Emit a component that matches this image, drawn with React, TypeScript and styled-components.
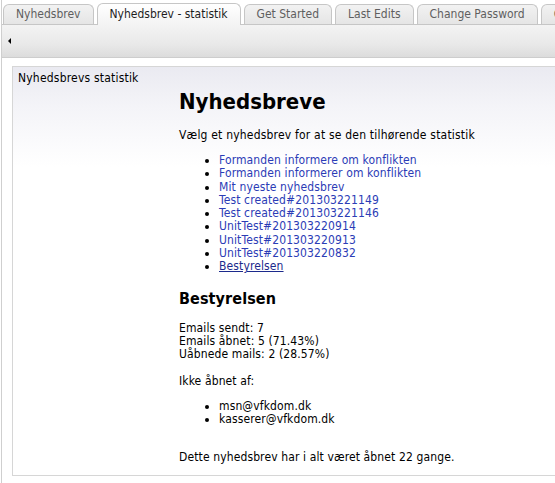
import React from "react";
import styled, { createGlobalStyle } from "styled-components";

const GlobalStyle = createGlobalStyle`
  html, body {
    margin: 0;
    padding: 0;
    background: #fff;
  }
  body {
    font-family: "DejaVu Sans Condensed", "DejaVu Sans", sans-serif;
    font-size: 12px;
    color: #000;
  }
`;

const tabs = [
  "Nyhedsbrev",
  "Nyhedsbrev - statistik",
  "Get Started",
  "Last Edits",
  "Change Password",
  "Change Settings",
];

const newsletters = [
  "Formanden informere om konflikten",
  "Formanden informerer om konflikten",
  "Mit nyeste nyhedsbrev",
  "Test created#201303221149",
  "Test created#201303221146",
  "UnitTest#201303220914",
  "UnitTest#201303220913",
  "UnitTest#201303220832",
  "Bestyrelsen",
];

const notOpened = ["msn@vfkdom.dk", "kasserer@vfkdom.dk"];

const App = () => {
  return (
    <>
      <GlobalStyle />
      <Page>
        <TabStrip>
          {tabs.map((t, i) => (
            <Tab key={t} $active={i === 1}>
              {t}
            </Tab>
          ))}
        </TabStrip>
        <Toolbar>
          <BackArrow />
        </Toolbar>
        <Panel>
          <Sidebar>Nyhedsbrevs statistik</Sidebar>
          <Main>
            <Title>Nyhedsbreve</Title>
            <Intro>Vælg et nyhedsbrev for at se den tilhørende statistik</Intro>
            <LinkList>
              {newsletters.map((n, i) => (
                <li key={n}>
                  <NewsLink href="#" $current={i === newsletters.length - 1}>
                    {n}
                  </NewsLink>
                </li>
              ))}
            </LinkList>
            <SubTitle>Bestyrelsen</SubTitle>
            <Stats>
              <div>Emails sendt: 7</div>
              <div>Emails åbnet: 5 (71.43%)</div>
              <div>Uåbnede mails: 2 (28.57%)</div>
            </Stats>
            <Label>Ikke åbnet af:</Label>
            <MailList>
              {notOpened.map((m) => (
                <li key={m}>{m}</li>
              ))}
            </MailList>
            <Footer>Dette nyhedsbrev har i alt været åbnet 22 gange.</Footer>
          </Main>
        </Panel>
      </Page>
    </>
  );
};

export default App;

const Page = styled.div`
  width: 100%;
  min-height: 483px;
  overflow: hidden;
  border-left: 1px solid #cfcfcf;
  margin-left: 1px;
  box-sizing: border-box;
`;

const TabStrip = styled.div`
  display: flex;
  align-items: flex-end;
  gap: 3px;
  height: 24px;
  padding-left: 1px;
  white-space: nowrap;
  position: relative;
  z-index: 1;
`;

const Tab = styled.div<{ $active?: boolean }>`
  flex: none;
  box-sizing: border-box;
  height: ${(p) => (p.$active ? "22px" : "20px")};
  line-height: ${(p) => (p.$active ? "21px" : "19px")};
  padding: 0 12px;
  border: 1px solid #c6c6c6;
  border-bottom: none;
  border-radius: 6px 6px 0 0;
  font-size: 12px;
  color: ${(p) => (p.$active ? "#1e1e1e" : "#5f5f5f")};
  background: ${(p) =>
    p.$active
      ? "linear-gradient(#ffffff, #f3f3f3)"
      : "linear-gradient(#f2f2f2, #e5e5e5)"};
  margin-bottom: ${(p) => (p.$active ? "-1px" : "0")};
`;

const Toolbar = styled.div`
  display: flex;
  align-items: center;
  height: 32px;
  padding-left: 6px;
  border-top: 1px solid #c6c6c6;
  border-bottom: 1px solid #cdcdcd;
  background: linear-gradient(#f3f3f3, #e9e9e9 60%, #dcdcdc);
`;

const BackArrow = styled.span`
  width: 0;
  height: 0;
  border-top: 3px solid transparent;
  border-bottom: 3px solid transparent;
  border-right: 3px solid #000;
`;

const Panel = styled.div`
  display: flex;
  margin: 8px 0 0 10px;
  border: 1px solid #d6d6d6;
  border-right: none;
  background: linear-gradient(#eaeaf1 0, #f4f4f8 40px, #fff 100px);
`;

const Sidebar = styled.div`
  flex: none;
  width: 161px;
  padding: 4px 0 0 5px;
  line-height: 14px;
  font-size: 12px;
  letter-spacing: 0.2px;
`;

const Main = styled.div`
  flex: 1;
  padding-bottom: 11px;
  font-size: 12px;
  letter-spacing: 0.12px;
`;

const Title = styled.h1`
  margin: 23px 0 0;
  font-size: 22px;
  line-height: 24px;
  font-weight: bold;
  letter-spacing: 0;
`;

const Intro = styled.p`
  margin: 14px 0 0;
  line-height: 14px;
  letter-spacing: 0.2px;
`;

const LinkList = styled.ul`
  margin: 12px 0 0;
  padding-left: 40px;
  line-height: 13.3px;
`;

const NewsLink = styled.a<{ $current?: boolean }>`
  color: ${(p) => (p.$current ? "#1c2a8c" : "#2b3cb6")};
  text-decoration: ${(p) => (p.$current ? "underline" : "none")};
`;

const SubTitle = styled.h2`
  margin: 15px 0 0;
  font-size: 16px;
  line-height: 20px;
  font-weight: bold;
  letter-spacing: 0.1px;
`;

const Stats = styled.div`
  margin-top: 13.5px;
  line-height: 13px;
`;

const Label = styled.p`
  margin: 14px 0 0;
  line-height: 13px;
`;

const MailList = styled.ul`
  margin: 12px 0 0;
  padding-left: 40px;
  line-height: 13px;
`;

const Footer = styled.p`
  margin: 25px 0 0;
  line-height: 13px;
`;
